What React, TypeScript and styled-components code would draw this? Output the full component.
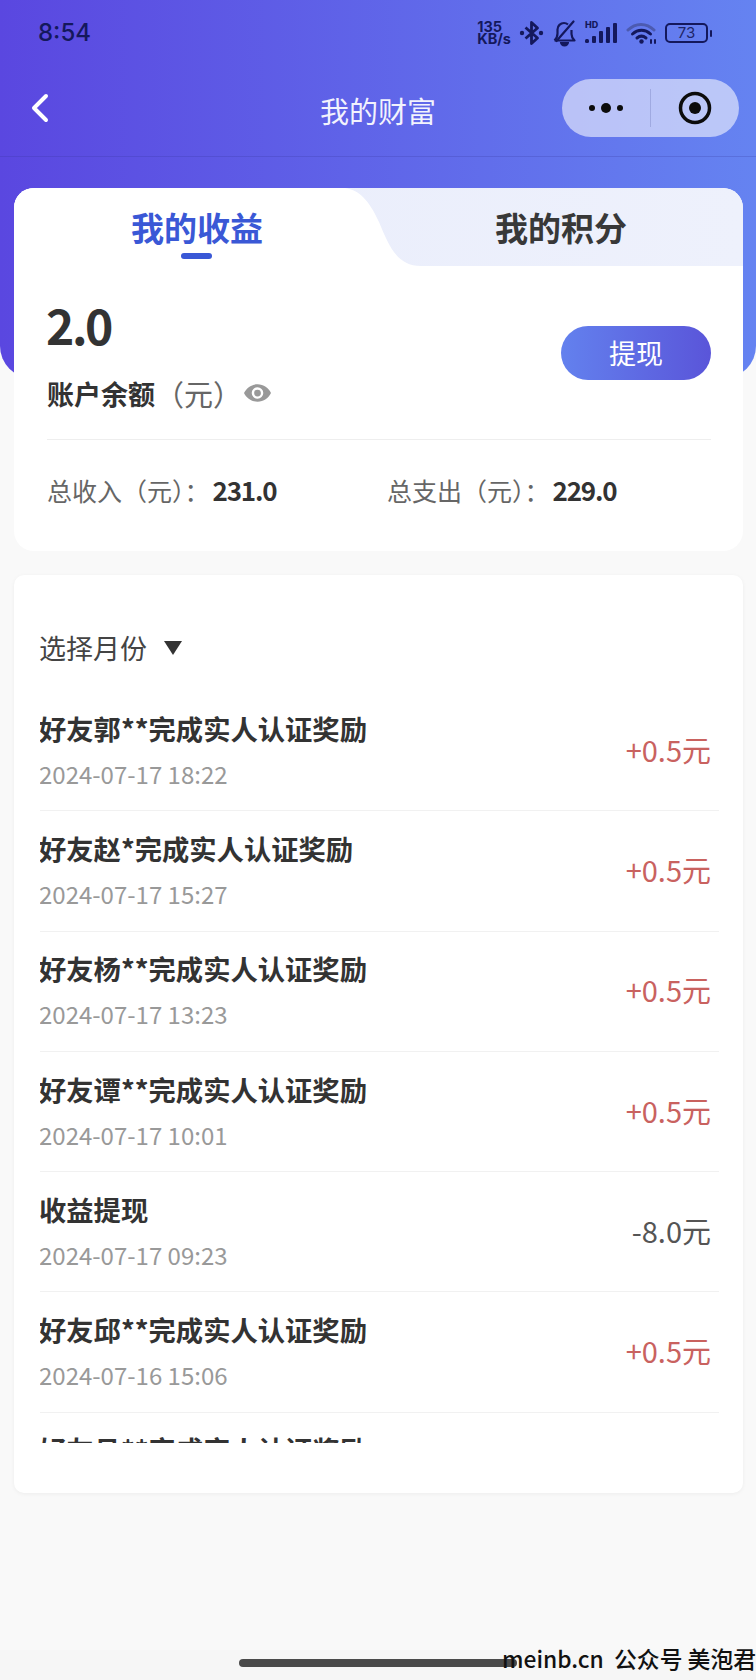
import React from "react";
import styled, { createGlobalStyle } from "styled-components";

const Global = createGlobalStyle`
  html, body { margin: 0; padding: 0; background: #f9f9f9; }
  * { box-sizing: border-box; }
  body { font-family: "Noto Sans CJK SC", "Noto Sans", sans-serif; }
`;

const Page = styled.div`
  position: relative;
  width: 756px;
  height: 1680px;
  overflow: hidden;
  display: flex;
  flex-direction: column;
  background: #f9f9f9;
`;

const Hero = styled.header`
  height: 378px;
  flex: none;
  background: linear-gradient(90deg, #5a47e0 0%, #6583f1 100%);
  border-radius: 0 0 32px 32px;
`;

const StatusBar = styled.div`
  height: 66px;
  display: flex;
  align-items: center;
  justify-content: space-between;
  padding: 0 44px 0 38px;
  color: #14185c;
`;

const Clock = styled.span`
  font-family: Inter, Roboto, sans-serif;
  font-size: 24px;
  font-weight: 500;
  line-height: 1;
`;

const StatusIcons = styled.div`
  display: flex;
  align-items: center;
  gap: 8px;
`;

const Speed = styled.div`
  font-family: Inter, Roboto, sans-serif;
  font-size: 14.5px;
  font-weight: 700;
  line-height: 12px;
  text-align: left;
`;

const SignalWrap = styled.div`
  position: relative;
  width: 33px;
  height: 24px;
`;

const HdMark = styled.span`
  position: absolute;
  left: 0;
  top: -1px;
  font-family: Inter, Roboto, sans-serif;
  font-size: 9px;
  font-weight: 800;
  line-height: 10px;
`;

const Battery = styled.div`
  display: flex;
  align-items: center;
  gap: 2px;
`;

const BatteryBody = styled.div`
  width: 43px;
  height: 20px;
  border: 2px solid #14185c;
  border-radius: 5px;
  font-family: Inter, Roboto, sans-serif;
  font-size: 15px;
  line-height: 16px;
  text-align: center;
  color: #1e2568;
`;

const BatteryTip = styled.div`
  width: 2px;
  height: 7px;
  border-radius: 1px;
  background: #14185c;
`;

const NavBar = styled.nav`
  height: 91px;
  display: grid;
  grid-template-columns: 1fr auto 1fr;
  align-items: center;
  padding: 0 17px 6px;
  border-bottom: 1px solid rgba(50, 50, 150, 0.22);
`;

const BackButton = styled.div`
  display: flex;
  align-items: center;
  padding-left: 13px;
`;

const NavTitle = styled.h1`
  margin: 4px 0 0;
  color: #fff;
  font-size: 29px;
  font-weight: 400;
  line-height: 40px;
  opacity: 0.92;
`;

const Capsule = styled.div`
  justify-self: end;
  width: 177px;
  height: 58px;
  border-radius: 29px;
  background: rgba(255, 255, 255, 0.56);
  display: flex;
  align-items: center;
`;

const CapsulePart = styled.div`
  flex: 1;
  height: 38px;
  display: flex;
  align-items: center;
  justify-content: center;
  & + & {
    border-left: 1px solid rgba(120, 130, 190, 0.4);
  }
`;

const Main = styled.main`
  margin-top: -190px;
  padding: 0 13px 0 14px;
  display: flex;
  flex-direction: column;
  gap: 24px;
`;

const WealthCard = styled.section`
  height: 363px;
  border-radius: 20px;
  background: #fff;
  overflow: hidden;
`;

const Tabs = styled.div`
  display: grid;
  grid-template-columns: 331px 1fr;
  height: 78px;
  background: linear-gradient(90deg, #e8ecfb 0%, #eef1fc 100%);
`;

const ActiveTab = styled.div`
  position: relative;
  background: #fff;
  padding-left: 35px;
  text-align: center;
  color: #3a58d6;
  font-size: 33px;
  font-weight: 700;
  line-height: 78px;
`;

const TabMark = styled.span`
  position: absolute;
  left: 167px;
  top: 65px;
  width: 31px;
  height: 6px;
  border-radius: 3px;
  background: #3a58d6;
`;

const IdleTab = styled.div`
  position: relative;
  padding-left: 34px;
  text-align: center;
  color: #383838;
  font-size: 33px;
  font-weight: 700;
  line-height: 78px;
`;

const TabCurve = styled.svg`
  position: absolute;
  left: 0;
  top: 0;
  width: 84px;
  height: 78px;
`;

const TabLabel = styled.span`
  position: relative;
`;

const Balance = styled.div`
  display: flex;
  justify-content: space-between;
  align-items: flex-start;
  padding: 0 32px 0 30px;
  height: 173px;
`;

const BalanceInfo = styled.div`
  padding-top: 23px;
`;

const Amount = styled.div`
  color: #333;
  font-size: 48px;
  font-weight: 700;
  line-height: 70px;
  letter-spacing: -2.4px;
  padding-left: 2px;
`;

const BalanceLabel = styled.div`
  display: flex;
  align-items: center;
  margin-top: 14px;
  padding-left: 3px;
  height: 40px;
  font-size: 27px;
  color: #333;
`;

const BalanceStrong = styled.span`
  font-weight: 700;
`;

const BalanceUnit = styled.span`
  font-size: 29px;
  font-weight: 400;
  color: #666;
  margin-right: 2px;
`;

const WithdrawButton = styled.div`
  margin-top: 60px;
  width: 150px;
  height: 54px;
  border-radius: 27px;
  background: linear-gradient(90deg, #6381ee 0%, #5a55d9 100%);
  color: #fff;
  font-size: 27px;
  line-height: 54px;
  text-align: center;
`;

const Totals = styled.div`
  margin: 0 32px 0 33px;
  border-top: 1px solid #eeeeee;
  padding-top: 32px;
  display: grid;
  grid-template-columns: 340px 1fr;
`;

const Total = styled.div`
  display: flex;
  align-items: center;
  font-size: 25px;
  line-height: 36px;
  color: #666;
`;

const TotalValue = styled.span`
  margin-left: 3px;
  color: #333;
  font-size: 26px;
  font-weight: 700;
  letter-spacing: -1.2px;
`;

const ListCard = styled.section`
  height: 918px;
  padding: 0 24px 0 26px;
  border-radius: 10px;
  background: #fff;
  box-shadow: 0 1px 4px rgba(0, 0, 0, 0.05);
`;

const MonthPicker = styled.div`
  height: 116px;
  padding-top: 53px;
  margin-left: -1px;
  display: flex;
  align-items: flex-start;
  gap: 17px;
  font-size: 27px;
  line-height: 40px;
  color: #444;
`;

const Caret = styled.span`
  margin-top: 13px;
  width: 0;
  height: 0;
  border-left: 9px solid transparent;
  border-right: 9px solid transparent;
  border-top: 14px solid #333;
`;

const List = styled.div`
  height: 752px;
  overflow: hidden;
`;

const Row = styled.div`
  height: 120.3px;
  display: flex;
  align-items: center;
  justify-content: space-between;
  padding: 0 8px 0 0;
  border-bottom: 1px solid #f1f1f1;
`;

const RowText = styled.div`
  display: flex;
  flex-direction: column;
  gap: 9px;
  margin-left: -1px;
`;

const RowTitle = styled.div`
  font-size: 27.3px;
  font-weight: 700;
  line-height: 39px;
  color: #333;
  margin-top: -2px;
`;

const RowDate = styled.div`
  font-size: 24px;
  line-height: 34px;
  color: #999;
`;

const RowAmount = styled.div<{ $income: boolean }>`
  font-size: 29px;
  line-height: 40px;
  margin-top: -4px;
  color: ${(p) => (p.$income ? "#c9625f" : "#555")};
`;

const BottomBar = styled.div`
  margin-top: auto;
  height: 30px;
  flex: none;
  background: #f6f6f6;
  padding: 9px 0 0 239px;
`;

const HomeIndicator = styled.div`
  width: 278px;
  height: 8px;
  border-radius: 4px;
  background: #4a4a4a;
`;

const Watermark = styled.div`
  position: absolute;
  right: 0;
  bottom: 8px;
  color: #111;
  font-size: 22.8px;
  font-weight: 500;
  line-height: 26px;
  white-space: nowrap;
`;

const rows = [
  { t: "好友郭**完成实人认证奖励", d: "2024-07-17 18:22", a: "+0.5元" },
  { t: "好友赵*完成实人认证奖励", d: "2024-07-17 15:27", a: "+0.5元" },
  { t: "好友杨**完成实人认证奖励", d: "2024-07-17 13:23", a: "+0.5元" },
  { t: "好友谭**完成实人认证奖励", d: "2024-07-17 10:01", a: "+0.5元" },
  { t: "收益提现", d: "2024-07-17 09:23", a: "-8.0元" },
  { t: "好友邱**完成实人认证奖励", d: "2024-07-16 15:06", a: "+0.5元" },
  { t: "好友吕**完成实人认证奖励", d: "2024-07-16 12:10", a: "+0.5元" },
];

export default function App() {
  return (
    <Page>
      <Global />
      <Hero>
        <StatusBar>
          <Clock>8:54</Clock>
          <StatusIcons>
            <Speed>
              135
              <br />
              KB/s
            </Speed>
            <svg width="25" height="26" viewBox="0 0 24 26" fill="none" stroke="#14185c" strokeWidth="2.8">
              <path d="M6 7.500l12 10.500-6 5.500V2.500l6 5.500L6 18.500" strokeLinejoin="round" />
              <circle cx="2.500" cy="13" r="2.200" fill="#14185c" stroke="none" />
              <circle cx="21.500" cy="13" r="2.200" fill="#14185c" stroke="none" />
            </svg>
            <svg width="25" height="27" viewBox="0 0 24 27" fill="none" stroke="#14185c" strokeWidth="2.2" strokeLinejoin="round">
              <path d="M2 20.500h20c-2-2-3-3.500-3-6.500V10M15.500 4.500C14.300 3.500 13 3 11.500 3c-3.500 0-6.500 2.800-6.500 6.500v4c0 2.800-1 5-3 7" />
              <path d="M4 21L21 1.500" strokeLinecap="round" />
              <path d="M8.500 22a3.500 3.500 0 0 0 7 0" fill="#14185c" />
            </svg>
            <SignalWrap>
              <HdMark>HD</HdMark>
              <svg width="33" height="24" viewBox="0 0 33 24" fill="#14185c">
                <rect x="0" y="18" width="4" height="4" rx="1.500" />
                <rect x="7" y="15" width="4" height="7" rx="1" />
                <rect x="14" y="10" width="4" height="12" rx="1" />
                <rect x="21" y="6" width="4" height="16" rx="1" />
                <rect x="28" y="2" width="4" height="20" rx="1" />
              </svg>
            </SignalWrap>
            <svg width="31" height="24" viewBox="0 0 31 24" fill="none" strokeLinecap="round">
              <path d="M2 9C9.500 1.500 20.500 1.500 28 9" stroke="#4c5ab0" strokeWidth="3" />
              <path d="M6.500 13c5.500-5 12.500-5 18 0" stroke="#14185c" strokeWidth="3" />
              <path d="M11 17c2.800-2.300 6.200-2.300 9 0" stroke="#14185c" strokeWidth="3" />
              <circle cx="15.500" cy="20.500" r="2.200" fill="#14185c" />
              <path d="M25 19v3M29 22v-3" stroke="#14185c" strokeWidth="2" />
            </svg>
            <Battery>
              <BatteryBody>73</BatteryBody>
              <BatteryTip />
            </Battery>
          </StatusIcons>
        </StatusBar>
        <NavBar>
          <BackButton>
            <svg width="20" height="30" viewBox="0 0 20 30" fill="none" stroke="#fff" strokeWidth="4" strokeLinecap="round" strokeLinejoin="round">
              <path d="M16 3L4 15l12 12" />
            </svg>
          </BackButton>
          <NavTitle>我的财富</NavTitle>
          <Capsule>
            <CapsulePart>
              <svg width="36" height="12" viewBox="0 0 36 12" fill="#0c0c0c">
                <circle cx="4" cy="6" r="3" />
                <circle cx="18" cy="6" r="5" />
                <circle cx="32" cy="6" r="3" />
              </svg>
            </CapsulePart>
            <CapsulePart>
              <svg width="34" height="34" viewBox="0 0 34 34" fill="none">
                <circle cx="17" cy="17" r="14.500" stroke="#0c0c0c" strokeWidth="3.500" />
                <circle cx="17" cy="17" r="6" fill="#0c0c0c" />
              </svg>
            </CapsulePart>
          </Capsule>
        </NavBar>
      </Hero>
      <Main>
        <WealthCard>
          <Tabs>
            <ActiveTab>
              我的收益
              <TabMark />
            </ActiveTab>
            <IdleTab>
              <TabCurve viewBox="0 0 84 78">
                <path d="M0 0C14 2 24 12 34 34C44 58 52 78 76 78H0Z" fill="#fff" />
              </TabCurve>
              <TabLabel>我的积分</TabLabel>
            </IdleTab>
          </Tabs>
          <Balance>
            <BalanceInfo>
              <Amount>2.0</Amount>
              <BalanceLabel>
                <BalanceStrong>账户余额</BalanceStrong>
                <BalanceUnit>（元）</BalanceUnit>
                <svg width="27" height="18" viewBox="0 0 28 18" fill="#999">
                  <path d="M14 0C7.500 0 2.500 3.800 0 9c2.500 5.200 7.500 9 14 9s11.500-3.800 14-9C25.500 3.800 20.500 0 14 0zm0 15a6 6 0 1 1 0-12 6 6 0 0 1 0 12z" />
                  <circle cx="14" cy="9" r="3.500" />
                </svg>
              </BalanceLabel>
            </BalanceInfo>
            <WithdrawButton>提现</WithdrawButton>
          </Balance>
          <Totals>
            <Total>
              总收入（元）：<TotalValue>231.0</TotalValue>
            </Total>
            <Total>
              总支出（元）：<TotalValue>229.0</TotalValue>
            </Total>
          </Totals>
        </WealthCard>
        <ListCard>
          <MonthPicker>
            选择月份
            <Caret />
          </MonthPicker>
          <List>
            {rows.map((r) => (
              <Row key={r.d}>
                <RowText>
                  <RowTitle>{r.t}</RowTitle>
                  <RowDate>{r.d}</RowDate>
                </RowText>
                <RowAmount $income={r.a.startsWith("+")}>{r.a}</RowAmount>
              </Row>
            ))}
          </List>
        </ListCard>
      </Main>
      <BottomBar>
        <HomeIndicator />
      </BottomBar>
      <Watermark>meinb.cn&nbsp; 公众号 美泡君</Watermark>
    </Page>
  );
}
